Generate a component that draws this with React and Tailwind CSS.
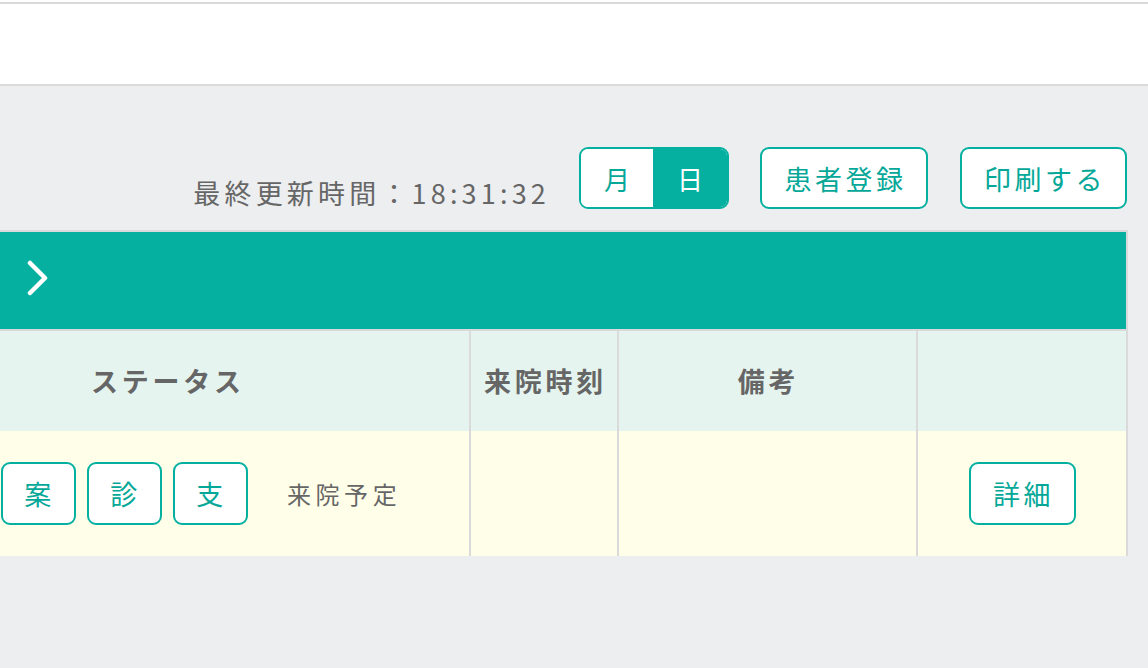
import React from "react";

const font = { fontFamily: '"Noto Sans CJK JP", "Noto Sans", sans-serif' };

function OutlineButton({ children, className = "" }) {
  return (
    <button
      className={`h-[62px] rounded-[9px] border-2 border-[#05b0a1] bg-white text-[27px] tracking-[0.13em] text-[#05a898] leading-none flex items-center justify-center ${className}`}
    >
      {children}
    </button>
  );
}

export default function App() {
  return (
    <div style={font} className="w-[1148px] h-[668px] bg-[#edeef0] overflow-hidden">
      {/* top header strip */}
      <div className="h-[2px] bg-white" />
      <div className="h-[84px] bg-white border-t-2 border-b-2 border-[#dadada]" />

      {/* toolbar */}
      <div className="flex items-end justify-end pt-[61px] pr-[21px]">
        <div className="-mb-[2px] mr-[29px] text-[27px] leading-[36px] tracking-[0.155em] text-[#666]">
          最終更新時間：18:31:32
        </div>
        <div className="flex h-[62px] w-[150px] overflow-hidden rounded-[9px] border-2 border-[#05b0a1]">
          <div className="flex w-[72px] items-center justify-center bg-white text-[26px] text-[#05a898]">月</div>
          <div className="flex flex-1 items-center justify-center bg-[#05b0a1] text-[26px] text-white">日</div>
        </div>
        <OutlineButton className="ml-[31px] w-[168px] pl-[3px]">患者登録</OutlineButton>
        <OutlineButton className="ml-[32px] w-[167px] pl-[3px]">印刷する</OutlineButton>
      </div>

      {/* schedule table */}
      <div className="mt-[21px] mr-[20px] border-t-2 border-r-2 border-[#dadada]">
        <div className="flex h-[97px] items-center bg-[#05b0a1] pl-[27px] pb-[5px]">
          <svg width="22" height="36" viewBox="0 0 22 36" fill="none">
            <polyline
              points="3,3 18,18 3,33"
              stroke="white"
              strokeWidth="4.5"
              strokeLinecap="round"
              strokeLinejoin="round"
            />
          </svg>
        </div>
        <div className="border-t-2 border-[#dadada]">
          {/* header row */}
          <div className="flex h-[100px] bg-[#e5f4ef] text-[27px] font-bold tracking-[0.14em] text-[#666]">
            <div className="flex w-[471px] items-center border-r-2 border-[#dadada] pl-[91px]">ステータス</div>
            <div className="flex w-[148px] items-center justify-center border-r-2 border-[#dadada] pl-[3px]">来院時刻</div>
            <div className="flex w-[297px] items-center justify-center pl-[2px]">備考</div>
            <div className="flex flex-1 border-l-2 border-[#dadada]" />
          </div>
          {/* body row */}
          <div className="flex h-[125px] bg-[#fffee9]">
            <div className="flex w-[471px] items-center border-r-2 border-[#dadada] pl-[1px]">
              <OutlineButton className="w-[75px] h-[63px] pl-[2px]">案</OutlineButton>
              <OutlineButton className="ml-[11px] w-[75px] h-[63px] pl-[2px]">診</OutlineButton>
              <OutlineButton className="ml-[11px] w-[75px] h-[63px] pl-[2px]">支</OutlineButton>
              <span className="ml-[39px] text-[24px] tracking-[0.19em] text-[#666]">来院予定</span>
            </div>
            <div className="w-[148px] border-r-2 border-[#dadada]" />
            <div className="w-[297px]" />
            <div className="flex flex-1 items-center justify-center border-l-2 border-[#dadada]">
              <OutlineButton className="w-[107px] h-[63px] pl-[3px]">詳細</OutlineButton>
            </div>
          </div>
        </div>
      </div>
    </div>
  );
}
